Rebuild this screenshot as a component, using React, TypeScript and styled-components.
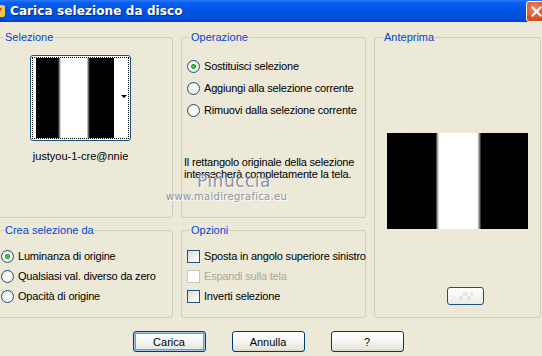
import React from 'react';
import styled, { createGlobalStyle } from 'styled-components';

const Global = createGlobalStyle`
  html, body { margin: 0; padding: 0; background: #ece9d8; }
  * { box-sizing: border-box; }
`;

const Window = styled.div`
  position: relative;
  width: 542px;
  height: 356px;
  overflow: hidden;
  background: #ece9d8;
  font-family: 'Liberation Sans', Arial, sans-serif;
  font-size: 11px;
  color: #000;
`;

const TitleBar = styled.div`
  height: 22px;
  display: flex;
  align-items: center;
  background: linear-gradient(
    #2a7af4 0%,
    #0a5ef0 12%,
    #0054e3 45%,
    #0050dc 85%,
    #0040c4 100%
  );
`;

const TitleIcon = styled.svg`
  width: 16px;
  height: 16px;
  margin-left: -10px;
  flex: none;
`;

const TitleText = styled.div`
  margin-left: 4px;
  flex: 1;
  color: #fff;
  font-family: 'DejaVu Sans', sans-serif;
  font-weight: bold;
  font-size: 12px;
  letter-spacing: 0.1px;
  text-shadow: 1px 1px 0 #0a2a8a;
`;

const CloseButton = styled.div`
  width: 21px;
  height: 21px;
  margin-right: -5px;
  margin-top: 1px;
  border: 1px solid #fff;
  border-radius: 3px;
  background: radial-gradient(circle at 40% 35%, #f28b68 0%, #e0542a 55%, #c33c12 100%);
  display: flex;
  align-items: center;
  justify-content: center;
`;

const Body = styled.div`
  padding-top: 9px;
`;

const Panels = styled.div`
  display: grid;
  grid-template-columns: 178px 185px 167px;
  grid-template-rows: 187px 94px;
  grid-template-areas:
    'sel op prev'
    'crea opt prev';
  column-gap: 8px;
  row-gap: 6px;
  margin-left: -5px;
`;

const Group = styled.fieldset<{ $area: string }>`
  margin: 0;
  padding: 0;
  min-width: 0;
  border: 1px solid #d0d0bf;
  border-radius: 3px;
  grid-area: ${(p) => p.$area};
  display: flex;
  flex-direction: column;
`;

const Legend = styled.legend`
  margin-left: 8px;
  padding: 0 1px;
  color: #0046d5;
  font-size: 11px;
  line-height: 13px;
`;

const SelectionBody = styled.div`
  display: flex;
  flex-direction: column;
  align-items: center;
  padding: 11px 7px 0 0;
`;

const Thumb = styled.div`
  position: relative;
  width: 101px;
  height: 86px;
  border: 1px solid #1b4f82;
  border-radius: 3px;
  padding: 1px;
  background: #fff;
`;

const ThumbInner = styled.div`
  height: 100%;
  border: 1px dotted #000;
  padding: 0 0 0 3px;
  background: #fff;
`;

const Stripes = styled.div<{ $w: string }>`
  height: 100%;
  width: ${(p) => p.$w};
  background: linear-gradient(
    90deg,
    #000 0%,
    #000 28%,
    #777 30%,
    #fff 32%,
    #fff 65%,
    #777 67%,
    #000 69%,
    #000 100%
  );
`;

const DropArrow = styled.div`
  position: absolute;
  right: 3px;
  top: 39px;
  width: 0;
  height: 0;
  border-left: 3px solid transparent;
  border-right: 3px solid transparent;
  border-top: 3px solid #000;
`;

const ThumbLabel = styled.div`
  margin-top: 9px;
  line-height: 13px;
`;

const OptionList = styled.div<{ $top: number; $gap: number }>`
  display: flex;
  flex-direction: column;
  gap: ${(p) => p.$gap}px;
  padding: ${(p) => p.$top}px 0 0 5px;
`;

const OptionRow = styled.label<{ $disabled?: boolean }>`
  display: flex;
  align-items: center;
  gap: 4px;
  height: 13px;
  line-height: 13px;
  white-space: nowrap;
  letter-spacing: -0.2px;
  color: ${(p) => (p.$disabled ? '#aca899' : '#000')};
`;

const RadioDot = styled.span<{ $on?: boolean }>`
  flex: none;
  width: 13px;
  height: 13px;
  border-radius: 50%;
  border: 1px solid #1c5180;
  background: ${(p) =>
    p.$on
      ? 'radial-gradient(circle, #55d655 0%, #21a121 28%, #fff 34%, #f4f4f0 60%, #dcdcd4 100%)'
      : 'radial-gradient(circle at 60% 60%, #fff 0%, #f4f4f0 50%, #dcdcd4 100%)'};
`;

const CheckBox = styled.span<{ $disabled?: boolean }>`
  flex: none;
  width: 13px;
  height: 13px;
  border: 1px solid ${(p) => (p.$disabled ? '#cac8bb' : '#1c5180')};
  background: ${(p) =>
    p.$disabled ? '#fff' : 'linear-gradient(135deg, #dcdcd7 0%, #f0f0ec 50%, #fff 100%)'};
`;

const Note = styled.p`
  margin: 30px 0 0 -3px;
  line-height: 12px;
  white-space: nowrap;
  letter-spacing: -0.2px;
`;

const PreviewBody = styled.div`
  display: flex;
  flex-direction: column;
  align-items: center;
  padding-top: 89px;
`;

const PreviewImage = styled.div`
  width: 141px;
  height: 96px;
  background: linear-gradient(
    90deg,
    #000 0%,
    #000 34.5%,
    #888 35.5%,
    #fff 37%,
    #fff 64%,
    #888 65.5%,
    #000 67%,
    #000 100%
  );
`;

const SmallButton = styled.div`
  margin: 58px 0 0 16px;
  width: 37px;
  height: 18px;
  border: 1px solid #1c5180;
  border-radius: 3px;
  background: linear-gradient(#fff, #ecebe6);
  display: flex;
  align-items: center;
  justify-content: center;
`;

const Checker = styled.div`
  width: 14px;
  height: 8px;
  opacity: 0.5;
  background-image: linear-gradient(45deg, #d8d8d8 25%, transparent 25%, transparent 75%, #d8d8d8 75%),
    linear-gradient(45deg, #d8d8d8 25%, transparent 25%, transparent 75%, #d8d8d8 75%);
  background-size: 8px 8px;
  background-position: 0 0, 4px 4px;
`;

const ButtonRow = styled.div`
  display: flex;
  justify-content: center;
  gap: 26px;
  margin-top: 13px;
  padding-right: 6px;
`;

const Button = styled.button<{ $default?: boolean }>`
  width: 73px;
  height: 21px;
  padding: 0;
  font-family: inherit;
  font-size: 11px;
  color: #000;
  border: 1px solid #003c74;
  border-radius: 3px;
  background: linear-gradient(#ffffff 0%, #f6f6f3 50%, #e6e5de 90%, #d6d0c5 100%);
  box-shadow: ${(p) =>
    p.$default ? 'inset 0 0 0 1px #a8c4f0, inset 0 0 0 2px #6d95e0' : 'none'};
`;

const Watermark = styled.div`
  position: absolute;
  left: 166px;
  top: 172px;
  display: flex;
  flex-direction: column;
  align-items: flex-start;
  color: #8f90a8;
  pointer-events: none;
  text-shadow: 1px 1px 0 #fff;
  font-family: 'DejaVu Sans', sans-serif;
`;

const MarkName = styled.span`
  margin-left: 31px;
  font-size: 17px;
  line-height: 19px;
  letter-spacing: 0.5px;
`;

const MarkSite = styled.span`
  font-size: 10px;
  line-height: 12px;
  letter-spacing: 0.3px;
`;

const radios1 = [
  { label: 'Sostituisci selezione', on: true },
  { label: 'Aggiungi alla selezione corrente' },
  { label: 'Rimuovi dalla selezione corrente' },
];

const radios2 = [
  { label: 'Luminanza di origine', on: true },
  { label: 'Qualsiasi val. diverso da zero' },
  { label: 'Opacità di origine' },
];

const checks = [
  { label: 'Sposta in angolo superiore sinistro' },
  { label: 'Espandi sulla tela', disabled: true },
  { label: 'Inverti selezione' },
];

export default function App() {
  return (
    <Window>
      <Global />
      <TitleBar>
        <TitleIcon viewBox="0 0 16 16">
          <rect x="1" y="2" width="14" height="12" rx="2" fill="#f4c542" />
          <path d="M4 5h8l-4 7z" fill="#d8402a" />
        </TitleIcon>
        <TitleText>Carica selezione da disco</TitleText>
        <CloseButton>
          <svg width="11" height="11" viewBox="0 0 11 11">
            <path d="M1.5 1.5l8 8M9.5 1.5l-8 8" stroke="#fff" strokeWidth="2" strokeLinecap="square" />
          </svg>
        </CloseButton>
      </TitleBar>
      <Body>
        <Panels>
          <Group $area="sel">
            <Legend>Selezione</Legend>
            <SelectionBody>
              <Thumb>
                <ThumbInner>
                  <Stripes $w="78px" />
                </ThumbInner>
                <DropArrow />
              </Thumb>
              <ThumbLabel>justyou-1-cre@nnie</ThumbLabel>
            </SelectionBody>
          </Group>
          <Group $area="op">
            <Legend>Operazione</Legend>
            <OptionList $top={16} $gap={9}>
              {radios1.map((r) => (
                <OptionRow key={r.label}>
                  <RadioDot $on={r.on} />
                  {r.label}
                </OptionRow>
              ))}
              <Note>
                Il rettangolo originale della selezione
                <br />
                intersecherà completamente la tela.
              </Note>
            </OptionList>
          </Group>
          <Group $area="prev">
            <Legend>Anteprima</Legend>
            <PreviewBody>
              <PreviewImage />
              <SmallButton>
                <Checker />
              </SmallButton>
            </PreviewBody>
          </Group>
          <Group $area="crea">
            <Legend>Crea selezione da</Legend>
            <OptionList $top={13} $gap={7}>
              {radios2.map((r) => (
                <OptionRow key={r.label}>
                  <RadioDot $on={r.on} />
                  {r.label}
                </OptionRow>
              ))}
            </OptionList>
          </Group>
          <Group $area="opt">
            <Legend>Opzioni</Legend>
            <OptionList $top={13} $gap={7}>
              {checks.map((c) => (
                <OptionRow key={c.label} $disabled={c.disabled}>
                  <CheckBox $disabled={c.disabled} />
                  {c.label}
                </OptionRow>
              ))}
            </OptionList>
          </Group>
        </Panels>
        <ButtonRow>
          <Button $default>Carica</Button>
          <Button>Annulla</Button>
          <Button>?</Button>
        </ButtonRow>
      </Body>
      <Watermark>
        <MarkName>Pinuccia</MarkName>
        <MarkSite>www.maidiregrafica.eu</MarkSite>
      </Watermark>
    </Window>
  );
}
